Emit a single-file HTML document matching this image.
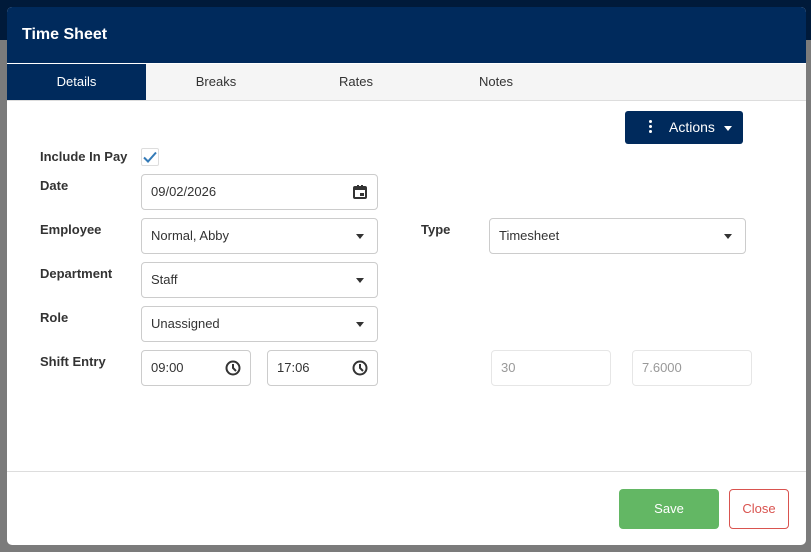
<!DOCTYPE html>
<html><head><style>
*{box-sizing:border-box;margin:0;padding:0}
body{width:811px;height:552px;overflow:hidden;background:#7b7b7b;font-family:"Liberation Sans",sans-serif;font-size:13px;color:#333;position:relative}
.top{position:absolute;left:0;top:0;width:811px;height:40px;background:#001a3a}
.modal{position:absolute;left:7px;top:7px;width:799px;height:538px;background:#fff;border-radius:5px;overflow:hidden}
.hdr{position:absolute;left:0;top:0;width:100%;height:56px;background:#002a5c;color:#fff;font-weight:bold;font-size:16px;padding:19px 0 0 15px}
.tabs{position:absolute;left:0;top:57px;width:100%;height:37px;background:#f5f5f5;border-bottom:1px solid #ddd}
.tab{position:absolute;top:0;height:36px;line-height:36px;text-align:center;color:#333}
.tab.a{background:#002a5c;color:#fff}
.lbl{position:absolute;font-weight:bold;color:#333}
.in{position:absolute;height:36px;border:1px solid #ccc;border-radius:4px;padding:0 9px;line-height:34px;color:#333}
.in.dis{border-color:#e6e6e6;color:#999}
.car{position:absolute;right:13px;top:15px;width:0;height:0;border-left:4px solid transparent;border-right:4px solid transparent;border-top:5px solid #333}
.ic{position:absolute;right:9px;top:9px}
.foot{position:absolute;left:0;top:464px;width:100%;border-top:1px solid #ddd}
</style></head><body>
<div class="top"></div>
<div class="modal">
<div class="hdr">Time Sheet</div>
<div class="tabs">
<div class="tab a" style="left:0;width:139px">Details</div>
<div class="tab" style="left:139px;width:140px">Breaks</div>
<div class="tab" style="left:279px;width:140px">Rates</div>
<div class="tab" style="left:419px;width:140px">Notes</div>
</div>
<div style="position:absolute;left:618px;top:104px;width:118px;height:33px;background:#002a5c;border-radius:3px;color:#fff;font-size:14px;line-height:33px">
<span style="position:absolute;left:24px;top:9px;width:3px;height:3px;background:#fff;border-radius:50%;box-shadow:0 5px 0 #fff,0 10px 0 #fff"></span>
<span style="position:absolute;left:44px">Actions</span>
<span style="position:absolute;left:99px;top:15px;border-left:4px solid transparent;border-right:4px solid transparent;border-top:5px solid #fff"></span>
</div>
<div class="lbl" style="left:33px;top:142px">Include In Pay</div>
<div style="position:absolute;left:134px;top:141px;width:18px;height:18px;border:1px solid #ddd;border-radius:2px">
<svg width="16" height="16" viewBox="0 0 16 16" style="position:absolute;left:0;top:0"><path d="M2 8.5l4 4 8-9" stroke="#337ab7" stroke-width="2" fill="none"/></svg></div>
<div class="lbl" style="left:33px;top:171px">Date</div>
<div class="in" style="left:134px;top:167px;width:237px">09/02/2026
<svg class="ic" width="16" height="16" viewBox="0 0 16 16"><rect x="2" y="3" width="12" height="11" rx="1" fill="none" stroke="#333" stroke-width="2"/><rect x="2" y="3" width="12" height="3" fill="#333"/><rect x="5" y="1" width="2" height="3" fill="#333"/><rect x="9" y="1" width="2" height="3" fill="#333"/><rect x="8" y="9" width="4" height="3" fill="#333"/></svg></div>
<div class="lbl" style="left:33px;top:215px">Employee</div>
<div class="in" style="left:134px;top:211px;width:237px">Normal, Abby<span class="car"></span></div>
<div class="lbl" style="left:414px;top:215px">Type</div>
<div class="in" style="left:482px;top:211px;width:257px">Timesheet<span class="car"></span></div>
<div class="lbl" style="left:33px;top:259px">Department</div>
<div class="in" style="left:134px;top:255px;width:237px">Staff<span class="car"></span></div>
<div class="lbl" style="left:33px;top:303px">Role</div>
<div class="in" style="left:134px;top:299px;width:237px">Unassigned<span class="car"></span></div>
<div class="lbl" style="left:33px;top:347px">Shift Entry</div>
<div class="in" style="left:134px;top:343px;width:110px">09:00
<svg class="ic" width="16" height="16" viewBox="0 0 16 16"><circle cx="8" cy="8" r="6.5" fill="none" stroke="#333" stroke-width="2"/><path d="M8 4v4l3 3" stroke="#333" stroke-width="2" fill="none"/></svg></div>
<div class="in" style="left:260px;top:343px;width:111px">17:06
<svg class="ic" width="16" height="16" viewBox="0 0 16 16"><circle cx="8" cy="8" r="6.5" fill="none" stroke="#333" stroke-width="2"/><path d="M8 4v4l3 3" stroke="#333" stroke-width="2" fill="none"/></svg></div>
<div class="in dis" style="left:484px;top:343px;width:120px">30</div>
<div class="in dis" style="left:625px;top:343px;width:120px">7.6000</div>
<div class="foot"></div>
<div style="position:absolute;left:612px;top:482px;width:100px;height:40px;background:#63b764;border-radius:4px;color:#fff;text-align:center;line-height:40px">Save</div>
<div style="position:absolute;left:722px;top:482px;width:60px;height:40px;border:1px solid #d9534f;border-radius:4px;color:#d9534f;text-align:center;line-height:38px">Close</div>
</div>
</body></html>
